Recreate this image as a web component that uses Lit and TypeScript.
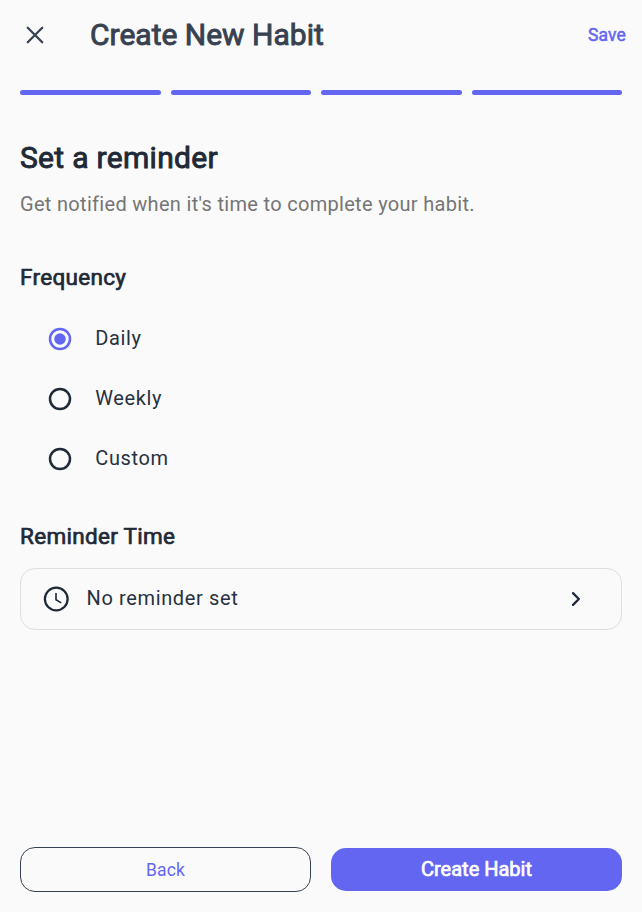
import { LitElement, html, css, svg } from "lit";
import { customElement, state } from "lit/decorators.js";

const FREQUENCIES = ["Daily", "Weekly", "Custom"];

@customElement("app-root")
export class AppRoot extends LitElement {
  @state() private selected = "Daily";

  static styles = css`
    :host {
      display: flex;
      flex-direction: column;
      box-sizing: border-box;
      width: 100%;
      height: 100vh;
      background: #fafafa;
      color: #1f2937;
      font-family: Roboto, "Liberation Sans", sans-serif;
      overflow: hidden;
    }
    svg { display: block; flex: none; }
    button { font: inherit; color: inherit; background: none; border: 0; padding: 0; margin: 0; }
    h1, h2, h3, p { margin: 0; white-space: nowrap; }
    .bar { display: flex; align-items: center; height: 70px; padding: 0 16px 0 20px; }
    .title { flex: 1; margin-left: 40px; font-size: 30px; line-height: 38px; font-weight: 400; color: #374151; -webkit-text-stroke: 0.9px #374151; }
    .save { font-size: 17.5px; letter-spacing: 0.125px; color: #6366f1; -webkit-text-stroke: 0.5px #6366f1; }
    .steps { display: grid; grid-template-columns: repeat(4, 1fr); padding: 20px 20px 0; }
    .step { height: 5px; border-radius: 2.5px; background: #6366f1; margin-right: 10px; }
    .step:last-child { margin-right: 0; }
    .body { flex: 1; padding: 43px 20px 0; }
    .heading { font-size: 30px; line-height: 40px; letter-spacing: 0.3px; font-weight: 400; -webkit-text-stroke: 0.9px #1f2937; }
    .hint { margin-top: 11px; font-size: 20px; line-height: 30px; letter-spacing: 0.31px; color: #757575; }
    .label { font-size: 22.5px; line-height: 30px; letter-spacing: 0.3px; font-weight: 400; -webkit-text-stroke: 0.7px #1f2937; }
    .frequency { margin-top: 43px; }
    .options { margin-top: 16.5px; }
    .option { display: flex; align-items: center; height: 60px; padding-left: 25px; font-size: 20px; letter-spacing: 0.625px; color: #273142; }
    .option span { margin-left: 20.3px; padding-bottom: 1px; }
    .reminder { margin-top: 32px; }
    .time { display: flex; align-items: center; box-sizing: border-box; width: 100%; height: 62px; margin-top: 17px; padding: 0 30px 0 20px; border: 1px solid #dedede; border-radius: 15px; font-size: 20px; letter-spacing: 0.625px; text-align: left; color: #273142; }
    .time span { flex: 1; margin-left: 15.6px; padding-bottom: 2px; }
    .actions { display: grid; grid-template-columns: 1fr 1fr; gap: 20px; padding: 0 20px 20px; }
    .action { height: 45px; box-sizing: border-box; border-radius: 15px; }
    .back { border: 1.25px solid #374151; color: #6366f1; font-size: 17.5px; letter-spacing: 0.125px; }
    .create { height: 43.75px; margin-top: 0.625px; padding-bottom: 1px; background: #6366f1; color: #fff; font-size: 20px; -webkit-text-stroke: 0.7px #fff; }
  `;

  private radio(on: boolean) {
    const color = on ? "#6366f1" : "#1f2937";
    return html`<svg width="30" height="30" viewBox="0 0 24 24">
      <circle cx="12" cy="12" r="8" fill="none" stroke=${color} stroke-width="2" />
      ${on ? svg`<circle cx="12" cy="12" r="4.6" fill=${color} />` : ""}
    </svg>`;
  }

  render() {
    return html`
      <header class="bar">
        <button aria-label="Close">
          <svg width="30" height="30" viewBox="0 0 24 24">
            <path stroke="#374151" stroke-width="1.8" stroke-linecap="round" d="M6.2 6.2 17.8 17.8M17.8 6.2 6.2 17.8" />
          </svg>
        </button>
        <h1 class="title">Create New Habit</h1>
        <button class="save">Save</button>
      </header>
      <div class="steps">${[1, 2, 3, 4].map(() => html`<div class="step"></div>`)}</div>
      <main class="body">
        <h2 class="heading">Set a reminder</h2>
        <p class="hint">Get notified when it's time to complete your habit.</p>
        <h3 class="label frequency">Frequency</h3>
        <div class="options" role="radiogroup">
          ${FREQUENCIES.map((name) => html`
            <div class="option" role="radio" aria-checked=${name === this.selected} @click=${() => (this.selected = name)}>
              ${this.radio(name === this.selected)}<span>${name}</span>
            </div>`)}
        </div>
        <h3 class="label reminder">Reminder Time</h3>
        <button class="time">
          <svg width="30" height="30" viewBox="0 0 24 24">
            <circle cx="12.2" cy="12" r="9.1" fill="none" stroke="#1f2937" stroke-width="1.8" />
            <path fill="none" stroke="#1f2937" stroke-width="1.3" d="M12 7.2V12.6L16.2 15.1" />
          </svg>
          <span>No reminder set</span>
          <svg width="30" height="30" viewBox="0 0 24 24">
            <path fill="none" stroke="#1f2937" stroke-width="1.8" stroke-linecap="round" stroke-linejoin="round" d="M9.6 7.3 14.3 12 9.6 16.7" />
          </svg>
        </button>
      </main>
      <footer class="actions">
        <button class="action back">Back</button>
        <button class="action create">Create Habit</button>
      </footer>
    `;
  }
}
